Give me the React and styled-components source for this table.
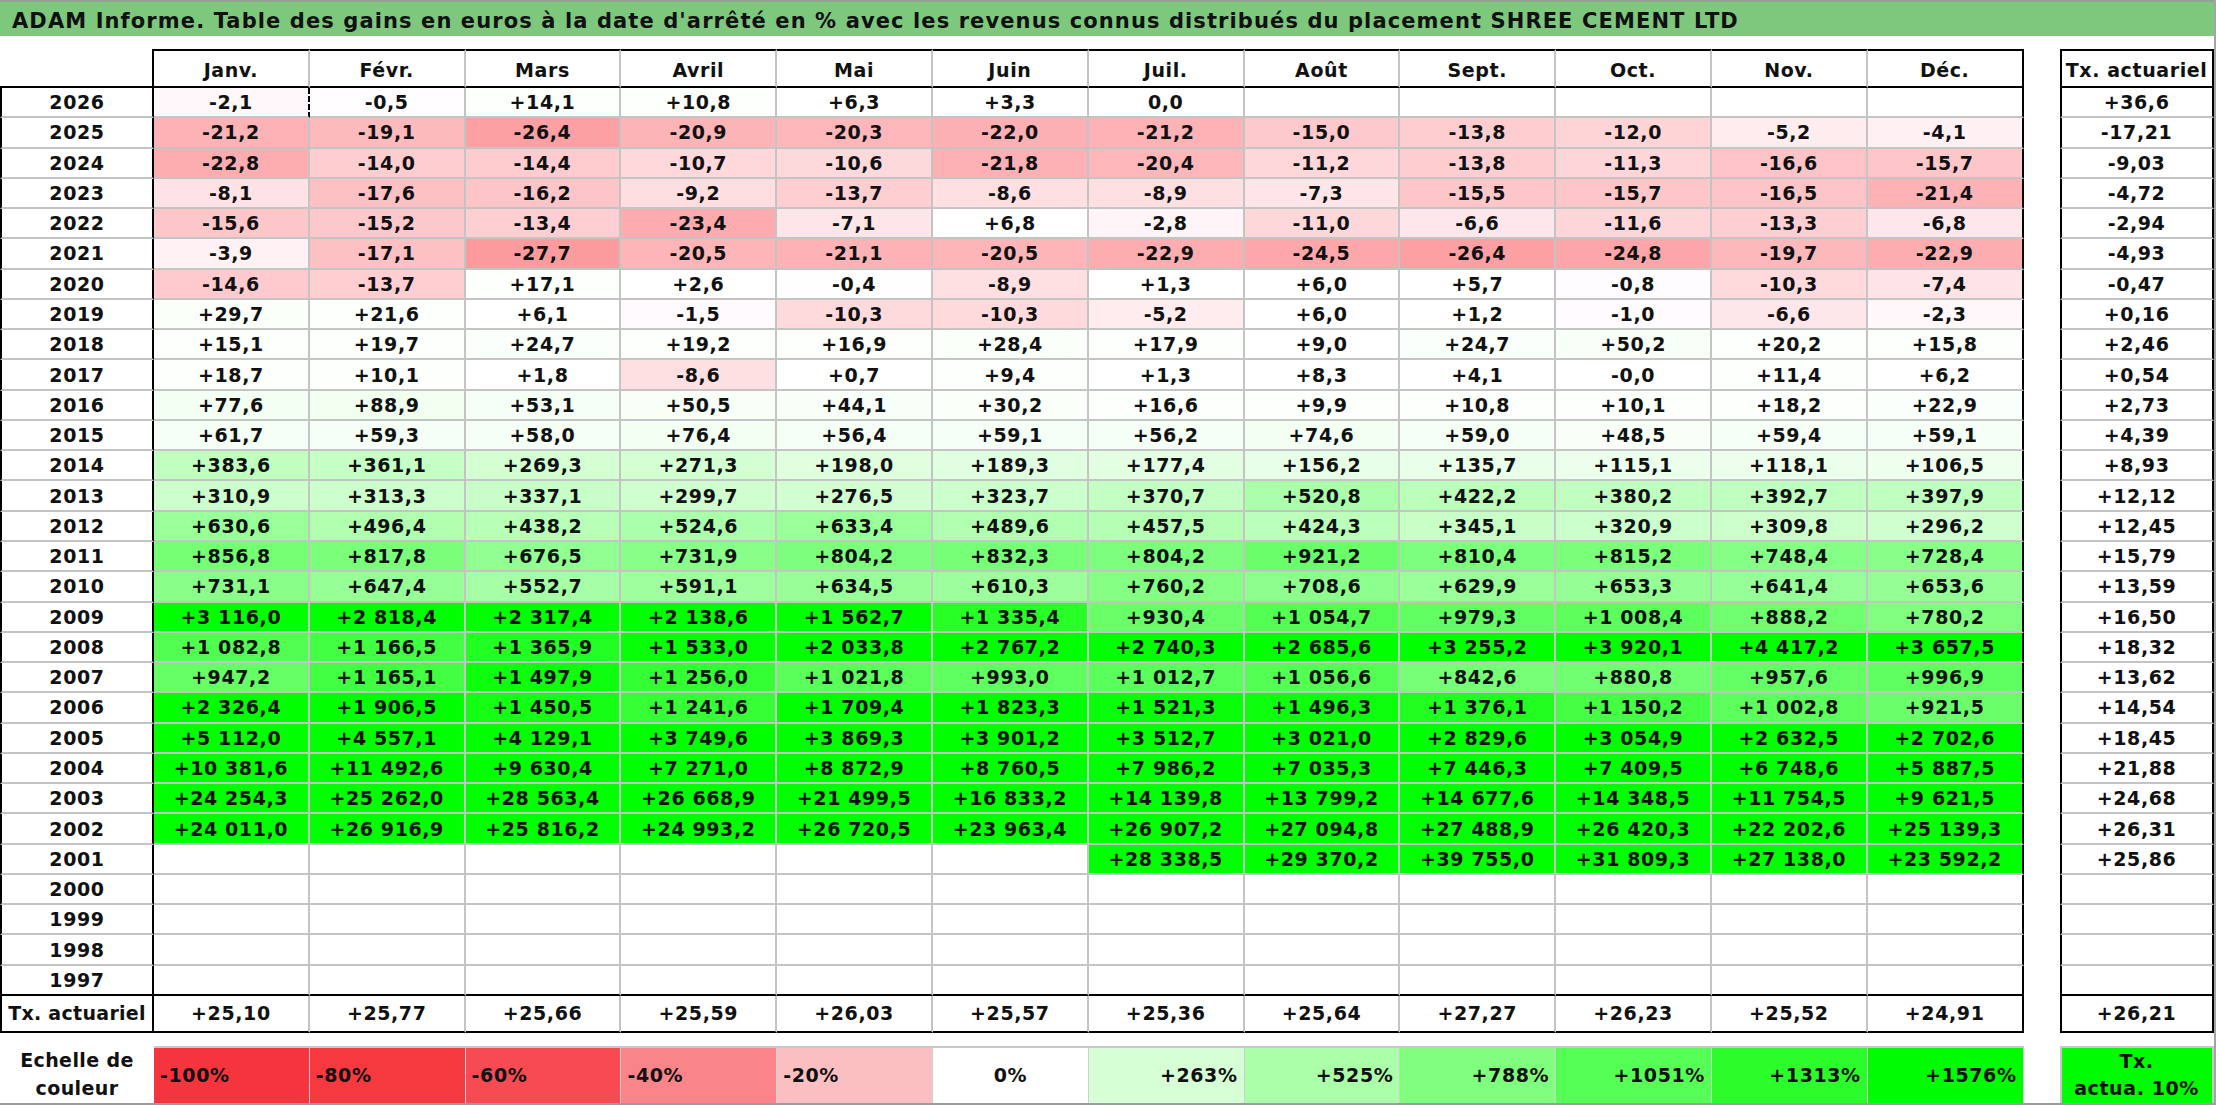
import React from "react";
import styled, { createGlobalStyle } from "styled-components";

const GlobalStyle = createGlobalStyle`
  html, body {
    margin: 0;
    padding: 0;
    background: #fff;
  }
  *, *::before, *::after {
    box-sizing: border-box;
  }
`;

// label col, 12 months, gap, yearly rate col
const COLS = "154px repeat(12, 155.8px) 36px 154px";
const GRID = "#c4c4c4";

const MONTHS = ["Janv.", "Févr.", "Mars", "Avril", "Mai", "Juin", "Juil.", "Août", "Sept.", "Oct.", "Nov.", "Déc."];

const ROWS = [
  ["2026", "-2,1|-0,5|+14,1|+10,8|+6,3|+3,3|0,0|||||", "+36,6"],
  ["2025", "-21,2|-19,1|-26,4|-20,9|-20,3|-22,0|-21,2|-15,0|-13,8|-12,0|-5,2|-4,1", "-17,21"],
  ["2024", "-22,8|-14,0|-14,4|-10,7|-10,6|-21,8|-20,4|-11,2|-13,8|-11,3|-16,6|-15,7", "-9,03"],
  ["2023", "-8,1|-17,6|-16,2|-9,2|-13,7|-8,6|-8,9|-7,3|-15,5|-15,7|-16,5|-21,4", "-4,72"],
  ["2022", "-15,6|-15,2|-13,4|-23,4|-7,1|+6,8|-2,8|-11,0|-6,6|-11,6|-13,3|-6,8", "-2,94"],
  ["2021", "-3,9|-17,1|-27,7|-20,5|-21,1|-20,5|-22,9|-24,5|-26,4|-24,8|-19,7|-22,9", "-4,93"],
  ["2020", "-14,6|-13,7|+17,1|+2,6|-0,4|-8,9|+1,3|+6,0|+5,7|-0,8|-10,3|-7,4", "-0,47"],
  ["2019", "+29,7|+21,6|+6,1|-1,5|-10,3|-10,3|-5,2|+6,0|+1,2|-1,0|-6,6|-2,3", "+0,16"],
  ["2018", "+15,1|+19,7|+24,7|+19,2|+16,9|+28,4|+17,9|+9,0|+24,7|+50,2|+20,2|+15,8", "+2,46"],
  ["2017", "+18,7|+10,1|+1,8|-8,6|+0,7|+9,4|+1,3|+8,3|+4,1|-0,0|+11,4|+6,2", "+0,54"],
  ["2016", "+77,6|+88,9|+53,1|+50,5|+44,1|+30,2|+16,6|+9,9|+10,8|+10,1|+18,2|+22,9", "+2,73"],
  ["2015", "+61,7|+59,3|+58,0|+76,4|+56,4|+59,1|+56,2|+74,6|+59,0|+48,5|+59,4|+59,1", "+4,39"],
  ["2014", "+383,6|+361,1|+269,3|+271,3|+198,0|+189,3|+177,4|+156,2|+135,7|+115,1|+118,1|+106,5", "+8,93"],
  ["2013", "+310,9|+313,3|+337,1|+299,7|+276,5|+323,7|+370,7|+520,8|+422,2|+380,2|+392,7|+397,9", "+12,12"],
  ["2012", "+630,6|+496,4|+438,2|+524,6|+633,4|+489,6|+457,5|+424,3|+345,1|+320,9|+309,8|+296,2", "+12,45"],
  ["2011", "+856,8|+817,8|+676,5|+731,9|+804,2|+832,3|+804,2|+921,2|+810,4|+815,2|+748,4|+728,4", "+15,79"],
  ["2010", "+731,1|+647,4|+552,7|+591,1|+634,5|+610,3|+760,2|+708,6|+629,9|+653,3|+641,4|+653,6", "+13,59"],
  ["2009", "+3 116,0|+2 818,4|+2 317,4|+2 138,6|+1 562,7|+1 335,4|+930,4|+1 054,7|+979,3|+1 008,4|+888,2|+780,2", "+16,50"],
  ["2008", "+1 082,8|+1 166,5|+1 365,9|+1 533,0|+2 033,8|+2 767,2|+2 740,3|+2 685,6|+3 255,2|+3 920,1|+4 417,2|+3 657,5", "+18,32"],
  ["2007", "+947,2|+1 165,1|+1 497,9|+1 256,0|+1 021,8|+993,0|+1 012,7|+1 056,6|+842,6|+880,8|+957,6|+996,9", "+13,62"],
  ["2006", "+2 326,4|+1 906,5|+1 450,5|+1 241,6|+1 709,4|+1 823,3|+1 521,3|+1 496,3|+1 376,1|+1 150,2|+1 002,8|+921,5", "+14,54"],
  ["2005", "+5 112,0|+4 557,1|+4 129,1|+3 749,6|+3 869,3|+3 901,2|+3 512,7|+3 021,0|+2 829,6|+3 054,9|+2 632,5|+2 702,6", "+18,45"],
  ["2004", "+10 381,6|+11 492,6|+9 630,4|+7 271,0|+8 872,9|+8 760,5|+7 986,2|+7 035,3|+7 446,3|+7 409,5|+6 748,6|+5 887,5", "+21,88"],
  ["2003", "+24 254,3|+25 262,0|+28 563,4|+26 668,9|+21 499,5|+16 833,2|+14 139,8|+13 799,2|+14 677,6|+14 348,5|+11 754,5|+9 621,5", "+24,68"],
  ["2002", "+24 011,0|+26 916,9|+25 816,2|+24 993,2|+26 720,5|+23 963,4|+26 907,2|+27 094,8|+27 488,9|+26 420,3|+22 202,6|+25 139,3", "+26,31"],
  ["2001", "||||||+28 338,5|+29 370,2|+39 755,0|+31 809,3|+27 138,0|+23 592,2", "+25,86"],
  ["2000", "|||||||||||", ""],
  ["1999", "|||||||||||", ""],
  ["1998", "|||||||||||", ""],
  ["1997", "|||||||||||", ""],
];

const TOTALS = ["+25,10", "+25,77", "+25,66", "+25,59", "+26,03", "+25,57", "+25,36", "+25,64", "+27,27", "+26,23", "+25,52", "+24,91"];

const LEGEND = [
  ["-100%", "#f5343e", "flex-start"],
  ["-80%", "#f5393f", "flex-start"],
  ["-60%", "#f74a52", "flex-start"],
  ["-40%", "#f98489", "flex-start"],
  ["-20%", "#fbbfc1", "flex-start"],
  ["0%", "#ffffff", "center"],
  ["+263%", "#d7ffd5", "flex-end"],
  ["+525%", "#abffa8", "flex-end"],
  ["+788%", "#80ff7e", "flex-end"],
  ["+1051%", "#55ff55", "flex-end"],
  ["+1313%", "#2bfd2b", "flex-end"],
  ["+1576%", "#00fc00", "flex-end"],
];

const Page = styled.div`
  width: 2216px;
  height: 1105px;
  overflow: hidden;
  background: #fff;
  border-right: 2px solid #a4a4a4;
  border-bottom: 2px solid #9c9c9c;
  font-family: "DejaVu Sans", "Liberation Sans", sans-serif;
  font-weight: 700;
  font-size: 19px;
  letter-spacing: 0.6px;
  color: #111;
`;

const TitleBar = styled.div`
  height: 36px;
  display: flex;
  align-items: center;
  padding: 4px 0 0 12px;
  background: #7dc87d;
  border-top: 2px solid #8fa38f;
  font-size: 21px;
  letter-spacing: 1.1px;
  white-space: nowrap;
`;

const Row = styled.div`
  display: grid;
  grid-template-columns: ${COLS};
  height: ${p => p.$h}px;
  margin-top: ${p => p.$gap || 0}px;
`;

const Centered = styled.div`
  display: flex;
  align-items: center;
  justify-content: center;
  white-space: nowrap;
`;

// empty top-left corner of the table
const HeadCorner = styled.div`
  border-right: 2px solid #000;
  border-bottom: 2px solid #000;
`;

const HeadCell = styled(Centered)`
  padding-top: 2px;
  border-top: 2px solid #000;
  border-bottom: 2px solid #000;
  border-right: 2px solid ${p => (p.$last ? "#000" : GRID)};
`;

const RateHead = styled(HeadCell)`
  border-left: 2px solid #000;
  border-right: 2px solid #000;
`;

const YearCell = styled(Centered)`
  border-left: 2px solid #000;
  border-right: 2px solid #000;
  border-bottom: 2px solid ${p => (p.$end ? "#000" : GRID)};
  letter-spacing: ${p => (p.$tight ? "0.3px" : "0.6px")};
`;

const ValueCell = styled(Centered)`
  border-right: 2px ${p => (p.$marked ? "dashed" : "solid")} ${p => (p.$last || p.$marked ? "#000" : GRID)};
  border-bottom: 2px solid ${p => (p.$end ? "#000" : GRID)};
`;

const RateCell = styled(Centered)`
  border-left: 2px solid #000;
  border-right: 2px solid #000;
  border-bottom: 2px solid ${p => (p.$end ? "#000" : GRID)};
`;

const LegendLabel = styled.div`
  display: flex;
  flex-direction: column;
  align-items: center;
  justify-content: center;
  line-height: 28px;
  letter-spacing: 0.4px;
`;

const Swatch = styled.div`
  display: flex;
  align-items: center;
  justify-content: ${p => p.$align};
  padding: 0 6px;
  background: ${p => p.$bg};
  border-top: 2px solid #c8c8c8;
  border-right: 1px solid #cfcfcf;
`;

const LegendKey = styled.div`
  display: flex;
  flex-direction: column;
  align-items: center;
  justify-content: center;
  line-height: 27px;
  background: #00fc00;
  border: 2px solid #c8c8c8;
  border-bottom: none;
`;

const toNumber = s => parseFloat(s.replace(/\s/g, "").replace(",", "."));

// colour scale: red for losses, green for gains (capped at +1576 %)
const scaleColor = s => {
  if (!s) return "#ffffff";
  const v = toNumber(s);
  if (v < 0) {
    const t = Math.min(-v, 100);
    const g = Math.max(52, Math.round(255 - 3.6 * t));
    const r = Math.round(255 - 0.1 * t);
    return `rgb(${r}, ${g}, ${Math.min(255, g + 3)})`;
  }
  const c = Math.round(255 * (1 - Math.min(v, 1576) / 1576));
  return `rgb(${c}, 255, ${c})`;
};

function YearRow({ year, values, rate, end }) {
  const cells = values.split("|");
  return (
    <Row $h={30.27}>
      <YearCell $end={end}>{year}</YearCell>
      {cells.map((v, i) => (
        <ValueCell
          key={i}
          $last={i === 11}
          $end={end}
          $marked={year === "2026" && i === 0}
          style={{ background: scaleColor(v) }}
        >
          {v}
        </ValueCell>
      ))}
      <div />
      <RateCell $end={end}>{rate}</RateCell>
    </Row>
  );
}

export default function App() {
  return (
    <>
      <GlobalStyle />
      <Page>
        <TitleBar>
          ADAM Informe. Table des gains en euros à la date d'arrêté en % avec les revenus connus distribués du placement SHREE CEMENT LTD
        </TitleBar>

        <Row $h={39} $gap={13}>
          <HeadCorner />
          {MONTHS.map((m, i) => (
            <HeadCell key={m} $last={i === 11}>
              {m}
            </HeadCell>
          ))}
          <div />
          <RateHead>Tx. actuariel</RateHead>
        </Row>

        {ROWS.map(([year, values, rate], i) => (
          <YearRow key={year} year={year} values={values} rate={rate} end={i === ROWS.length - 1} />
        ))}

        <Row $h={37}>
          <YearCell $end $tight>Tx. actuariel</YearCell>
          {TOTALS.map((t, i) => (
            <ValueCell key={i} $last={i === 11} $end>
              {t}
            </ValueCell>
          ))}
          <div />
          <RateCell $end>+26,21</RateCell>
        </Row>

        <Row $h={57} $gap={13}>
          <LegendLabel>
            <span>Echelle de</span>
            <span>couleur</span>
          </LegendLabel>
          {LEGEND.map(([label, bg, align]) => (
            <Swatch key={label} $bg={bg} $align={align}>
              {label}
            </Swatch>
          ))}
          <div />
          <LegendKey>
            <span>Tx.</span>
            <span>actua. 10%</span>
          </LegendKey>
        </Row>
      </Page>
    </>
  );
}
